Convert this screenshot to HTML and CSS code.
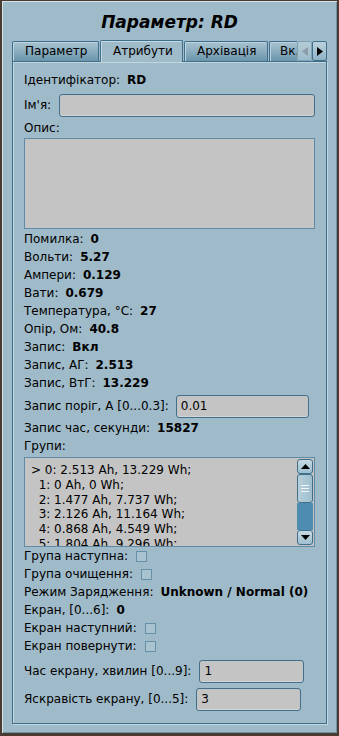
FILE: index.html
```html
<!DOCTYPE html>
<html lang="uk">
<head>
    <meta charset="UTF-8">
    <meta name="viewport" content="width=device-width, initial-scale=1.0">
    <title>Параметр: RD</title>
    <link rel="stylesheet" href="styles.css">
</head>
<body>

<div class="window">
    <h1 class="title">Параметр: RD</h1>

    <div class="tabbar">
        <div class="tab-strip">
            <div class="tab tab-param">Параметр</div>
            <div class="tab tab-attr active">Атрибути</div>
            <div class="tab tab-arch">Архівація</div>
            <div class="tab tab-more">Вк.</div>
        </div>
        <div class="tab-arrows">
            <span class="arrow-btn disabled">
                <svg width="6" height="9" viewBox="0 0 6 9"><path d="M6 0 L0 4.5 L6 9 Z"/></svg>
            </span>
            <span class="arrow-btn">
                <svg width="6" height="9" viewBox="0 0 6 9"><path d="M0 0 L6 4.5 L0 9 Z"/></svg>
            </span>
        </div>
    </div>

    <div class="pane">
        <div class="field first">
            <span>Ідентифікатор:</span><b>RD</b>
        </div>

        <div class="field input-row name-row">
            <span>Ім'я:</span>
            <input type="text" class="edit wide" value="">
        </div>

        <div class="field">
            <span>Опис:</span>
        </div>
        <textarea class="memo"></textarea>

        <div class="field"><span>Помилка:</span><b>0</b></div>
        <div class="field"><span>Вольти:</span><b>5.27</b></div>
        <div class="field"><span>Ампери:</span><b>0.129</b></div>
        <div class="field"><span>Вати:</span><b>0.679</b></div>
        <div class="field"><span>Температура, °C:</span><b>27</b></div>
        <div class="field"><span>Опір, Ом:</span><b>40.8</b></div>
        <div class="field"><span>Запис:</span><b>Вкл</b></div>
        <div class="field"><span>Запис, АГ:</span><b>2.513</b></div>
        <div class="field"><span>Запис, ВтГ:</span><b>13.229</b></div>

        <div class="field input-row threshold-row">
            <span>Запис поріг, А [0...0.3]:</span>
            <input type="text" class="edit threshold" value="0.01">
        </div>

        <div class="field"><span>Запис час, секунди:</span><b>15827</b></div>
        <div class="field"><span>Групи:</span></div>

        <div class="listbox">
            <div class="list-items">&gt; 0: 2.513 Ah, 13.229 Wh;
  1: 0 Ah, 0 Wh;
  2: 1.477 Ah, 7.737 Wh;
  3: 2.126 Ah, 11.164 Wh;
  4: 0.868 Ah, 4.549 Wh;
  5: 1.804 Ah, 9.296 Wh;</div>
            <div class="scrollbar">
                <span class="sb-btn">
                    <svg width="9" height="5" viewBox="0 0 9 5"><path d="M0 5 L4.5 0 L9 5 Z"/></svg>
                </span>
                <span class="sb-thumb">
                    <i></i><i></i><i></i>
                </span>
                <span class="sb-track"></span>
                <span class="sb-btn">
                    <svg width="9" height="5" viewBox="0 0 9 5"><path d="M0 0 L4.5 5 L9 0 Z"/></svg>
                </span>
            </div>
        </div>

        <div class="field"><span>Група наступна:</span><span class="check"></span></div>
        <div class="field"><span>Група очищення:</span><span class="check"></span></div>
        <div class="field"><span>Режим Зарядження:</span><b>Unknown / Normal (0)</b></div>
        <div class="field"><span>Екран, [0...6]:</span><b>0</b></div>
        <div class="field"><span>Екран наступний:</span><span class="check"></span></div>
        <div class="field"><span>Екран повернути:</span><span class="check"></span></div>

        <div class="field input-row screen-row">
            <span>Час екрану, хвилин [0...9]:</span>
            <input type="text" class="edit short" value="1">
        </div>
        <div class="field input-row screen-row">
            <span>Яскравість екрану, [0...5]:</span>
            <input type="text" class="edit short" value="3">
        </div>
    </div>
</div>

</body>
</html>
```

FILE: styles.css
```css
body {
    margin: 0;
    padding: 0;
    background-color: #9fbac8;
    font-family: "DejaVu Sans", Verdana, sans-serif;
    font-size: 12px;
    color: #000;
}

.window {
    box-sizing: border-box;
    width: 339px;
    height: 736px;
    padding: 0 10px;
    background-color: #9fbac8;
    border-style: solid;
    border-color: #4a3a31;
    border-width: 1px 2px 3px 2px;
    box-shadow: inset 1px 1px 0 #d3e3ea, inset -1px -1px 0 #6f93a6;
}

.title {
    margin: 10px 0 0 0;
    height: 22px;
    line-height: 22px;
    text-align: center;
    font-size: 17px;
    font-style: italic;
    font-weight: bold;
}

/* tabs */
.tabbar {
    display: flex;
    margin-top: 7px;
    height: 22px;
    position: relative;
    z-index: 1;
}

.tab-strip {
    display: flex;
    align-items: flex-end;
    width: 285px;
    overflow: hidden;
}

.tab {
    box-sizing: border-box;
    flex: none;
    height: 20px;
    line-height: 18px;
    padding: 0 0 0 12px;
    margin-bottom: 1px;
    border: 1px solid #3f6f8b;
    border-bottom: none;
    border-radius: 2px 2px 0 0;
    background: linear-gradient(#a8c3d1, #6b95ab);
    box-shadow: inset 1px 1px 0 #bcd3de;
    white-space: nowrap;
    overflow: hidden;
}

.tab + .tab {
    margin-left: 1px;
}

.tab-param {
    width: 87px;
}

.tab-attr {
    width: 83px;
}

.tab-arch {
    width: 84px;
}

.tab-more {
    width: 30px;
    padding-left: 10px;
    border-right: none;
    border-radius: 2px 0 0 0;
}

.tab.active {
    height: 22px;
    line-height: 20px;
    margin-bottom: 0;
    background: #9fbac8;
    box-shadow: inset 1px 1px 0 #c6dae3;
}

.tab-arrows {
    display: flex;
    align-items: flex-end;
    padding-bottom: 1px;
}

.arrow-btn {
    box-sizing: border-box;
    display: flex;
    align-items: center;
    justify-content: center;
    width: 15px;
    height: 20px;
    border: 1px solid #3f6f8b;
    border-radius: 2px;
    background: linear-gradient(#bcd2dd, #8fb2c4);
}

.arrow-btn.disabled {
    border-color: #7fa3b6;
    background: linear-gradient(#b4cbd6, #9cbccb);
}

.arrow-btn svg {
    fill: #000;
}

.arrow-btn.disabled svg {
    fill: #8a9da7;
}

/* page */
.pane {
    box-sizing: border-box;
    height: 663px;
    margin-top: -1px;
    padding: 9px 11px 0 11px;
    border: 1px solid #3f6f8b;
    box-shadow: inset 1px 1px 0 #c2d6df, 1px 1px 0 #c2d6df;
    display: flex;
    flex-direction: column;
}

.field {
    display: flex;
    align-items: center;
    gap: 7px;
    height: 18px;
    white-space: nowrap;
}

.field b {
    font-weight: bold;
}

.input-row {
    height: 24px;
    gap: 8px;
}

.name-row {
    margin-top: 4px;
    margin-bottom: 2px;
}

.threshold-row {
    margin-top: 2px;
    margin-bottom: 1px;
    gap: 7px;
}

.screen-row {
    margin-top: 4px;
}

.edit {
    box-sizing: border-box;
    height: 23px;
    padding: 0 4px;
    border: 1px solid #3f6f8b;
    border-radius: 3px;
    background-color: #c4c4c4;
    box-shadow: inset 0 -1px 0 #d6d6d6;
    font-family: "DejaVu Sans", Verdana, sans-serif;
    font-size: 12px;
    color: #000;
}

.edit.wide {
    flex: 1;
}

.edit.threshold {
    width: 133px;
}

.edit.short {
    width: 105px;
}

.memo {
    box-sizing: border-box;
    height: 91px;
    margin: 1px 0 1px 0;
    border: 1px solid #5f8ba4;
    background-color: #c4c4c4;
    resize: none;
}

/* groups list */
.listbox {
    box-sizing: border-box;
    display: flex;
    height: 90px;
    margin-top: 2px;
    border: 1px solid #5f8ba4;
    background-color: #c4c4c4;
}

.list-items {
    flex: 1;
    padding: 5px 0 0 6px;
    line-height: 14.8px;
    white-space: pre;
    overflow: hidden;
}

.scrollbar {
    display: flex;
    flex-direction: column;
    width: 16px;
    margin: 1px 1px 1px 0;
}

.sb-btn {
    box-sizing: border-box;
    display: flex;
    align-items: center;
    justify-content: center;
    height: 15px;
    border: 1px solid #3f6f8b;
    border-radius: 3px;
    background: linear-gradient(#c6dae3, #9ebfcf);
}

.sb-btn svg {
    fill: #000;
}

.sb-thumb {
    box-sizing: border-box;
    display: flex;
    flex-direction: column;
    align-items: center;
    justify-content: center;
    gap: 2px;
    height: 29px;
    border: 1px solid #3f6f8b;
    border-radius: 3px;
    background: linear-gradient(90deg, #b7cfda, #9fbfcf);
}

.sb-thumb i {
    display: block;
    width: 8px;
    height: 1px;
    background-color: #f2f7f9;
}

.sb-track {
    flex: 1;
    background-color: #4e8db1;
}

.check {
    box-sizing: border-box;
    width: 11px;
    height: 11px;
    margin-left: 1px;
    border: 1px solid #6690a7;
    background-color: #a8c2cf;
}
```
